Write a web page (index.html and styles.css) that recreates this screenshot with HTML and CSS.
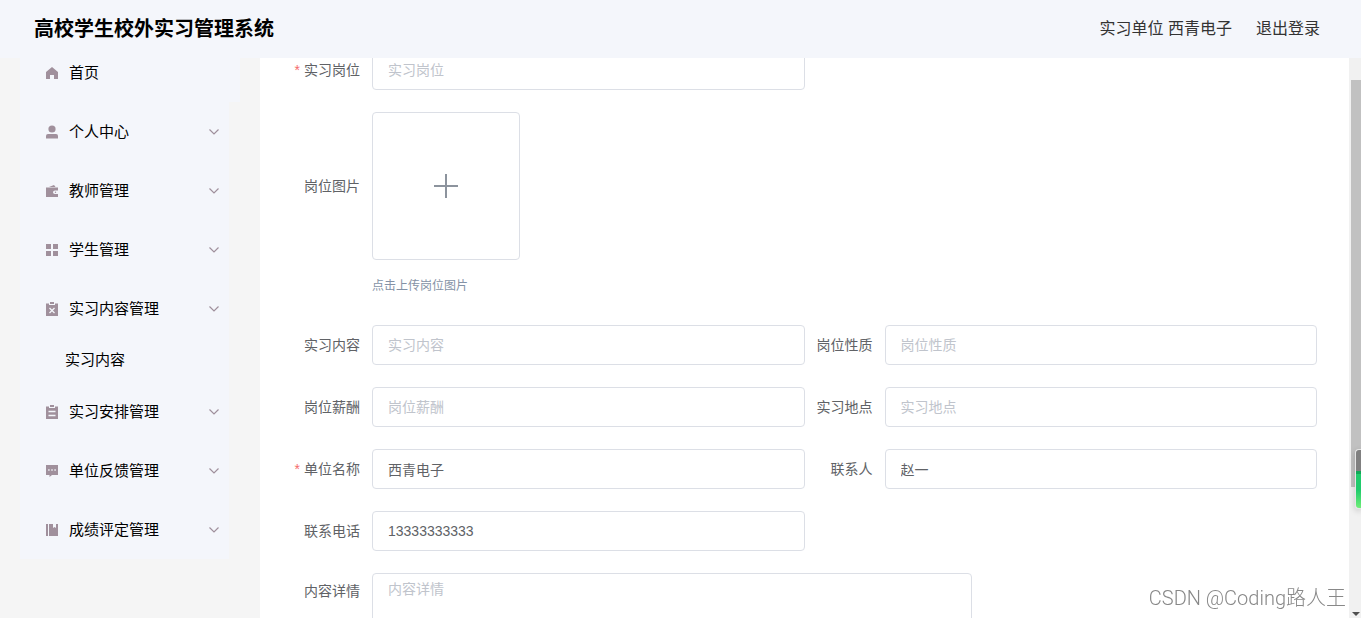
FILE: index.html
```html
<!DOCTYPE html>
<html lang="zh-CN">
<head>
<meta charset="utf-8">
<title>高校学生校外实习管理系统</title>
<link rel="stylesheet" href="styles.css">
</head>
<body>
<header class="header">
  <h1 class="title">高校学生校外实习管理系统</h1>
  <div class="account">
    <span>实习单位 西青电子</span>
    <button type="button" class="logout">退出登录</button>
  </div>
</header>
<div class="layout">
  <nav class="sidebar">
    <ul class="menu">
      <li class="home"><a class="item" href="#">
        <svg class="icon" viewBox="0 0 12 12"><path d="M6 0 12 5v7H8V8H4v4H0V5z"/></svg>
        <span>首页</span></a></li>
      <li><a class="item" href="#">
        <svg class="icon tall" viewBox="0 0 12 14"><circle cx="6" cy="4" r="3.600"/><path d="M0 13.500V11q0-2 2-2h8q2 0 2 2v2.500z"/></svg>
        <span>个人中心</span>
        <svg class="arrow" viewBox="0 0 10 6"><path d="m.5.500 4.500 4.500L9.500.500"/></svg></a></li>
      <li><a class="item" href="#">
        <svg class="icon" viewBox="0 0 12 12"><path d="m3 2 5-2 1.500 2zM0 2.500h12v3H9q-2 0-2 1.800T9 9h3v3H0z"/><circle cx="9.500" cy="7.300" r=".7"/></svg>
        <span>教师管理</span>
        <svg class="arrow" viewBox="0 0 10 6"><path d="m.5.500 4.500 4.500L9.500.500"/></svg></a></li>
      <li><a class="item" href="#">
        <svg class="icon" viewBox="0 0 12 12"><path d="M0 0h5v5H0zM7 0h5v5H7zM0 7h5v5H0zM7 7h5v5H7z"/></svg>
        <span>学生管理</span>
        <svg class="arrow" viewBox="0 0 10 6"><path d="m.5.500 4.500 4.500L9.500.500"/></svg></a></li>
      <li><a class="item" href="#">
        <svg class="icon tall" viewBox="0 0 12 14"><path d="M4 0h4v2H4zM0 1.500h3V3h6V1.500h3V14H0z"/><path class="cut" d="m3.500 6 5 5m0-5-5 5"/></svg>
        <span>实习内容管理</span>
        <svg class="arrow" viewBox="0 0 10 6"><path d="m.5.500 4.500 4.500L9.500.500"/></svg></a>
        <a class="subitem" href="#">实习内容</a></li>
      <li><a class="item" href="#">
        <svg class="icon tall" viewBox="0 0 12 14"><path d="M4 0h4v2H4zM0 1.500h3V3h6V1.500h3V14H0z"/><path class="cut" d="M2.500 6.500h7m-7 4h7"/></svg>
        <span>实习安排管理</span>
        <svg class="arrow" viewBox="0 0 10 6"><path d="m.5.500 4.500 4.500L9.500.500"/></svg></a></li>
      <li><a class="item" href="#">
        <svg class="icon" viewBox="0 0 12 12"><path d="M0 0h12v10H6l-2.500 2V10H0z"/><path class="cut" d="M2.200 5h1.400M5.300 5h1.400M8.400 5h1.400"/></svg>
        <span>单位反馈管理</span>
        <svg class="arrow" viewBox="0 0 10 6"><path d="m.5.500 4.500 4.500L9.500.500"/></svg></a></li>
      <li><a class="item" href="#">
        <svg class="icon" viewBox="0 0 12 12"><path d="M0 0h2v12H0zM3 0h4v4l1.500-1L10 4V0h2v12H3z"/></svg>
        <span>成绩评定管理</span>
        <svg class="arrow" viewBox="0 0 10 6"><path d="m.5.500 4.500 4.500L9.500.500"/></svg></a></li>
    </ul>
  </nav>
  <main class="main">
    <form class="form">
      <div class="field first-col"><label class="required" for="post">实习岗位</label><input id="post" type="text" placeholder="实习岗位"></div>
      <div class="field wide">
        <label for="upload">岗位图片</label>
        <div class="upload-box">
          <button id="upload" type="button" class="upload" aria-label="岗位图片"><svg class="plus" viewBox="0 0 24 24"><path d="M12 0v24M0 12h24"/></svg></button>
        </div>
        <p class="hint">点击上传岗位图片</p>
      </div>
      <div class="field"><label for="content">实习内容</label><input id="content" type="text" placeholder="实习内容"></div>
      <div class="field"><label for="nature">岗位性质</label><input id="nature" type="text" placeholder="岗位性质"></div>
      <div class="field"><label for="salary">岗位薪酬</label><input id="salary" type="text" placeholder="岗位薪酬"></div>
      <div class="field"><label for="place">实习地点</label><input id="place" type="text" placeholder="实习地点"></div>
      <div class="field"><label class="required" for="company">单位名称</label><input id="company" type="text" value="西青电子"></div>
      <div class="field"><label for="contact">联系人</label><input id="contact" type="text" value="赵一"></div>
      <div class="field first-col"><label for="phone">联系电话</label><input id="phone" type="text" value="13333333333"></div>
      <div class="field wide top"><label for="detail">内容详情</label><textarea id="detail" rows="8" placeholder="内容详情"></textarea></div>
    </form>
  </main>
  <div class="scrollbar"><div class="thumb"></div><svg class="down" viewBox="0 0 8 4"><path d="M0 0h8L4 4z"/></svg></div>
</div>
<div class="meter"></div>
<div class="watermark">CSDN @Coding路人王</div>
</body>
</html>
```
FILE: styles.css
```css
* { box-sizing: border-box; }
body {
  margin: 0;
  height: 100vh;
  display: flex;
  flex-direction: column;
  overflow: hidden;
  background: #f5f5f5;
  color: #000;
  font-family: "Liberation Sans", "Noto Sans CJK SC", sans-serif;
}
button, input, textarea { font-family: inherit; }
.header {
  flex: none;
  height: 58px;
  padding: 0 41px 0 34px;
  display: flex;
  align-items: center;
  justify-content: space-between;
  background: #f4f6fb;
}
.title { margin: 0; font-size: 20px; line-height: 30px; }
.account { display: flex; align-items: center; gap: 24px; font-size: 16px; line-height: 24px; color: #333; }
.logout { padding: 0; border: 0; background: none; color: inherit; font-size: 16px; line-height: 24px; }
.layout { flex: 1; min-height: 0; display: flex; }

.sidebar { flex: none; width: 260px; padding-left: 20px; overflow: hidden; }
.menu { width: 209px; margin: -15px 0 0; padding: 0; list-style: none; background: #f4f6fb; }
.home { width: 220px; background: #f4f6fb; }
.item {
  height: 59px;
  padding: 0 10px 0 26px;
  display: flex;
  align-items: center;
  color: #000;
  font-size: 15px;
  line-height: 22px;
  text-decoration: none;
}
.icon { width: 12px; height: 12px; margin-right: 11px; fill: #a0909c; }
.tall { height: 14px; }
.cut { fill: none; stroke: #f4f6fb; stroke-width: 1.3; }
.arrow { width: 10px; height: 6px; margin-left: auto; fill: none; stroke: #a0909c; stroke-width: 1.2; }
.subitem {
  display: block;
  height: 44px;
  padding-left: 45px;
  color: #000;
  font-size: 15px;
  line-height: 44px;
  text-decoration: none;
}

.main { flex: 1; min-width: 0; overflow: hidden; background: #fff; }
.form {
  margin-top: -8px;
  padding: 0 32px;
  display: grid;
  grid-template-columns: 1fr 1fr;
  row-gap: 22px;
}
.field { display: grid; grid-template-columns: 80px 1fr; align-items: center; }
.first-col { grid-column: 1; }
.wide { grid-column: 1 / -1; }
.field label { padding-right: 12px; text-align: right; font-size: 14px; line-height: 40px; color: #606266; white-space: nowrap; }
.required::before { content: "*"; margin-right: 4px; color: #f56c6c; }
.field input, .field textarea {
  width: 100%;
  border: 1px solid #dcdfe6;
  border-radius: 4px;
  background: #fff;
  color: #606266;
  font-size: 14px;
}
.field input { height: 40px; padding: 0 15px; }
.field textarea { display: block; max-width: 600px; padding: 5px 15px; line-height: 21px; resize: none; }
.top { align-items: start; }
.top label { line-height: 36px; }
::placeholder { color: #c0c4cc; opacity: 1; }
.upload {
  width: 148px;
  height: 148px;
  padding: 0;
  display: flex;
  align-items: center;
  justify-content: center;
  border: 1px solid #dcdfe6;
  border-radius: 4px;
  background: #fff;
}
.plus { width: 24px; height: 24px; fill: none; stroke: #8c939d; stroke-width: 2; }
.hint { grid-column: 2; margin: 11px 0 2px; font-size: 12px; line-height: 30px; color: #8492a6; }

.scrollbar {
  flex: none;
  width: 12px;
  padding: 22px 0 2px 2px;
  display: flex;
  flex-direction: column;
  justify-content: space-between;
  background: #f1f1f1;
}
.thumb { height: 76%; background: #c1c1c1; }
.down { width: 8px; height: 4px; align-self: center; fill: #505050; }
.meter {
  position: fixed;
  right: 0;
  top: 449px;
  width: 6px;
  height: 60px;
  border: 1px solid #e6e6e6;
  border-right: 0;
  border-radius: 4px 0 0 4px;
  background: linear-gradient(#808080 0 21px, #10a858 21px 24px, #20cb6c 24px 40px, #70ee78);
  box-shadow: 0 2px 6px rgba(0, 0, 0, .2);
}
.watermark {
  position: fixed;
  right: 15px;
  bottom: 6px;
  font-family: Roboto, "Noto Sans CJK SC", sans-serif;
  font-weight: 300;
  font-size: 20px;
  line-height: 28px;
  color: #888;
}
```
